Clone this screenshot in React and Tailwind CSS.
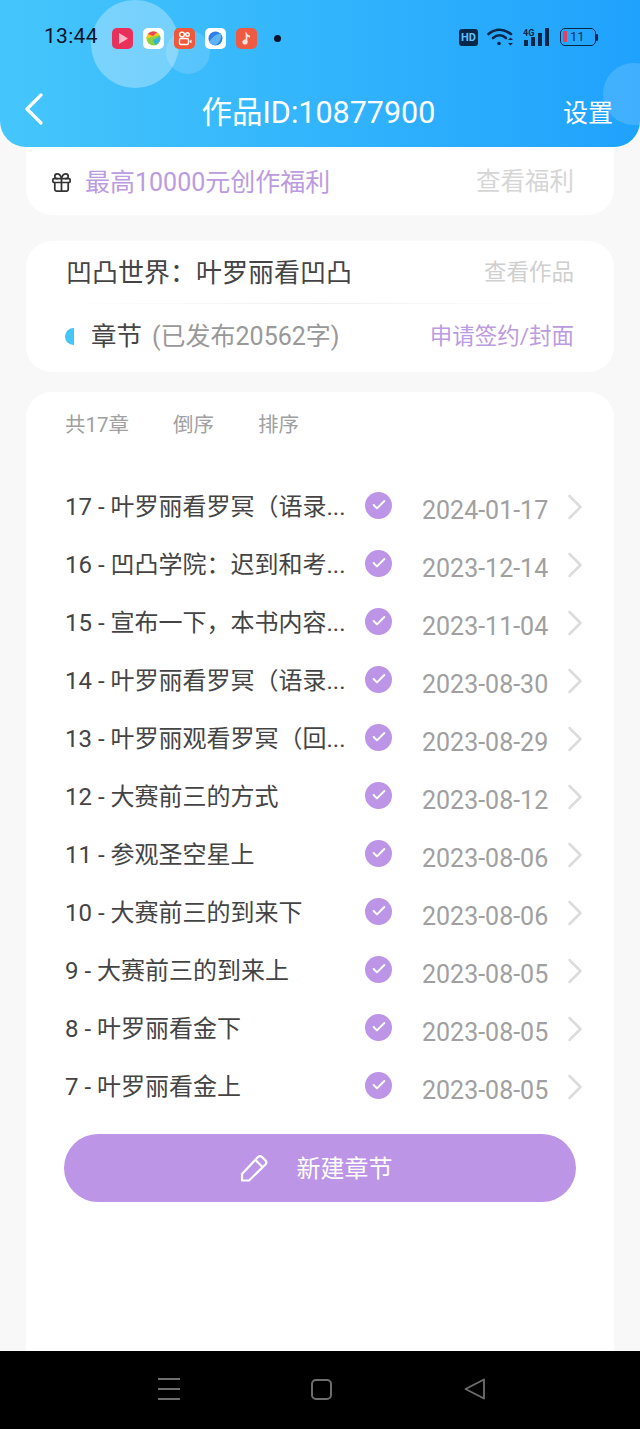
import { Check, Gift } from "lucide-react";

const chapters = [
  { title: "17 - 叶罗丽看罗冥（语录...", date: "2024-01-17" },
  { title: "16 - 凹凸学院：迟到和考...", date: "2023-12-14" },
  { title: "15 - 宣布一下，本书内容...", date: "2023-11-04" },
  { title: "14 - 叶罗丽看罗冥（语录...", date: "2023-08-30" },
  { title: "13 - 叶罗丽观看罗冥（回...", date: "2023-08-29" },
  { title: "12 - 大赛前三的方式", date: "2023-08-12" },
  { title: "11 - 参观圣空星上", date: "2023-08-06" },
  { title: "10 - 大赛前三的到来下", date: "2023-08-06" },
  { title: "9 - 大赛前三的到来上", date: "2023-08-05" },
  { title: "8 - 叶罗丽看金下", date: "2023-08-05" },
  { title: "7 - 叶罗丽看金上", date: "2023-08-05" },
];

function AppIcons() {
  return (
    <div className="flex items-center gap-[10px] ml-[14px] mt-[2px]">
      <svg width="21" height="21" viewBox="0 0 21 21">
        <rect width="21" height="21" rx="5" fill="#e8305a" />
        <path d="M7 5l9 5.500-9 5.500z" fill="#fbb6c6" />
      </svg>
      <svg width="21" height="21" viewBox="0 0 21 21">
        <rect width="21" height="21" rx="5" fill="#fff" />
        <circle cx="10.500" cy="10.500" r="7" fill="#8bd13c" />
        <path d="M3.500 10.500a7 7 0 0 1 13-3.500z" fill="#f6c821" />
        <path d="M5 6a7 7 0 0 1 9-1.500L10 8z" fill="#e8455c" />
        <path d="M17 8a7 7 0 0 1-5 9l-2-5z" fill="#34b6d8" />
      </svg>
      <svg width="21" height="21" viewBox="0 0 21 21">
        <rect width="21" height="21" rx="5" fill="#f0583c" />
        <circle cx="8" cy="6.500" r="2.400" fill="none" stroke="#fff" strokeWidth="1.400" />
        <circle cx="13.500" cy="6.500" r="1.800" fill="none" stroke="#fff" strokeWidth="1.400" />
        <rect x="5.500" y="10.500" width="9" height="6" rx="1.500" fill="none" stroke="#fff" strokeWidth="1.400" />
        <path d="M15.500 13l2-1.200v3.400l-2-1.200" fill="#fff" />
      </svg>
      <svg width="21" height="21" viewBox="0 0 21 21">
        <rect width="21" height="21" rx="5" fill="#fff" />
        <circle cx="10.500" cy="10.500" r="7" fill="#2c7fe8" />
        <path d="M4 14c3-5 7-8 12-9 1 5-1 9-5 12-3 0-6-1-7-3z" fill="#5fb4f5" />
      </svg>
      <svg width="21" height="21" viewBox="0 0 21 21">
        <rect width="21" height="21" rx="5" fill="#ee5a42" />
        <circle cx="9" cy="14" r="2.600" fill="#fde4dc" />
        <path d="M10.500 14V6.500c1 1.800 2.500 2 3.500 2.200" fill="none" stroke="#fde4dc" strokeWidth="1.700" />
      </svg>
      <span className="ml-[7px] w-[7px] h-[7px] rounded-full bg-[#06122a]" />
    </div>
  );
}

function StatusIcons() {
  return (
    <div className="flex items-center text-[#06264a] gap-[9px]">
      <span className="w-[19px] h-[17px] rounded-[3px] bg-[#06264a] text-[#5fc2ff] text-[11px] font-bold leading-[17px] text-center">
        HD
      </span>
      <svg width="27" height="20" viewBox="0 0 27 20" fill="none" stroke="currentColor" strokeWidth="2.600" strokeLinecap="round">
        <path d="M1.500 7C8 1.500 16 1.500 24 7" />
        <path d="M6 11c4-3.500 9-3.500 13 0" />
        <circle cx="12" cy="16.500" r="1.800" fill="currentColor" stroke="none" />
        <path d="M21 13l2.500-2.500L26 13z" fill="currentColor" stroke="none" />
        <path d="M21 16l2.500 2.500L26 16z" fill="currentColor" stroke="none" />
      </svg>
      <svg width="28" height="20" viewBox="0 0 28 20" fill="currentColor">
        <rect x="1" y="13" width="4" height="6" />
        <rect x="8" y="10" width="4" height="9" />
        <rect x="15" y="6" width="4" height="13" />
        <rect x="22" y="1" width="4" height="18" />
        <text x="0" y="9" fontSize="9" fontWeight="700" fontFamily="Roboto, sans-serif">4G</text>
      </svg>
      <div className="flex items-center">
        <div className="relative w-[36px] h-[18px] rounded-[5px] border-[1.5px] border-[#06264a] text-[13px] leading-[15px] text-[#0c3560] pl-[9px]">
          <span className="absolute left-[2px] top-[2px] w-[4px] h-[11px] bg-[#e8405a] rounded-[1px]" />
          11
        </div>
        <span className="w-[2px] h-[7px] bg-[#06264a] rounded-r-[1px]" />
      </div>
    </div>
  );
}

function ChapterRow({ title, date }) {
  return (
    <div className="h-[58px] flex items-center">
      <span className="w-[300px] shrink-0 whitespace-nowrap overflow-hidden text-[24px] text-[#444444] leading-[30px] mt-[2px]">
        {title}
      </span>
      <span className="shrink-0 w-[27px] h-[27px] rounded-full bg-[#bc95e6] flex items-center justify-center -mt-[2px]">
        <Check size={16} color="#ffffff" strokeWidth={3} />
      </span>
      <span className="shrink-0 ml-[30px] whitespace-nowrap text-[25px] text-[#a0a0a0] leading-[30px] mt-[10px]">
        {date}
      </span>
      <svg className="shrink-0 ml-[19px] mt-[2px]" width="16" height="26" viewBox="0 0 16 26" fill="none" stroke="#dcdcdc" strokeWidth="2.600" strokeLinecap="round" strokeLinejoin="round">
        <path d="M2.500 2l11 11-11 11" />
      </svg>
    </div>
  );
}

export default function App() {
  return (
    <div className="relative w-[640px] h-[1429px] overflow-hidden flex flex-col bg-[#f8f8f8] font-['Roboto','Noto_Sans_CJK_SC',sans-serif]">
      <header className="relative z-10 shrink-0 h-[147px] overflow-hidden rounded-b-[26px] bg-gradient-to-r from-[#45c6fb] to-[#1fa2fd]">
        {/* bubbles */}
        <div className="absolute left-[166px] top-[30px] w-[44px] h-[44px] rounded-full bg-white/15" />
        <div className="absolute left-[91px] top-0 w-[88px] h-[88px] rounded-full bg-white/30" />
        <div className="absolute left-[603px] top-[63px] w-[62px] h-[62px] rounded-full bg-white/15" />

        <div className="relative flex items-center justify-between h-[74px] pl-[44px] pr-[42px]">
          <div className="flex items-center">
            <span className="text-[21px] text-[#06122a] tracking-[0.3px]">13:44</span>
            <AppIcons />
          </div>
          <StatusIcons />
        </div>

        <div className="relative flex items-center h-[73px] pl-[24px] pr-[27px] text-white">
          <div className="flex-1 -mt-[4px]">
            <svg width="20" height="32" viewBox="0 0 20 32" fill="none" stroke="currentColor" strokeWidth="3.200" strokeLinecap="round" strokeLinejoin="round">
              <path d="M17 2L3 16l14 14" />
            </svg>
          </div>
          <h1 className="text-[30.500px] font-normal mt-[5px] whitespace-nowrap">作品ID:10877900</h1>
          <div className="flex-1 flex justify-end">
            <span className="text-[25px] mt-[7px]">设置</span>
          </div>
        </div>
      </header>

      <main className="flex-1 flex flex-col mx-[26px]">
        {/* benefits */}
        <section className="h-[68px] bg-white rounded-b-[26px] flex items-center justify-between pl-[24px] pr-[40px]">
          <div className="flex items-center mt-[3px]">
            <Gift size={23} color="#333333" strokeWidth={1.800} />
            <span className="ml-[12px] text-[25px] text-[#bc9be0]">最高10000元创作福利</span>
          </div>
          <span className="text-[24.500px] text-[#d6d6d6] mt-[3px]">查看福利</span>
        </section>

        {/* work info */}
        <section className="mt-[26px] h-[131px] bg-white rounded-[26px] px-[40px]">
          <div className="h-[62px] flex items-center justify-between">
            <span className="text-[26px] text-[#444444] mt-[2px]">凹凸世界：叶罗丽看凹凸</span>
            <span className="text-[22.500px] text-[#cfcfcf] mt-[1px]">查看作品</span>
          </div>
          <div className="h-px bg-gradient-to-r from-white via-[#efefef] to-white" />
          <div className="h-[67px] flex items-center justify-between -mt-[1px]">
            <div className="flex items-center">
              <span className="w-[9px] h-[17px] rounded-l-full bg-[#45c6f5] -ml-[1px]" />
              <span className="ml-[17px] text-[25.500px] text-[#444444]">章节</span>
              <span className="ml-[10px] text-[25px] text-[#999999]">(已发布20562字)</span>
            </div>
            <span className="text-[22.500px] text-[#bc9be0]">申请签约/封面</span>
          </div>
        </section>

        {/* chapter list */}
        <section className="mt-[20px] flex-1 bg-white rounded-t-[26px] pl-[39px] pr-[24px] pt-[19px]">
          <div className="flex items-center gap-[44px] text-[20.500px] text-[#a0a0a0] h-[28px]">
            <span>共17章</span>
            <span>倒序</span>
            <span>排序</span>
          </div>
          <div className="mt-[38px]">
            {chapters.map((c) => (
              <ChapterRow key={c.title} title={c.title} date={c.date} />
            ))}
          </div>
          <button className="mt-[19px] w-[512px] -ml-[1px] h-[68px] rounded-full bg-[#bc95e6] flex items-center justify-center text-white text-[24px]">
            <svg className="-ml-[8px]" width="28" height="28" viewBox="0 0 28 28" fill="none" stroke="currentColor" strokeWidth="2.200" strokeLinejoin="round">
              <path d="M2 26.500v-6.500L18 3a3 3 0 0 1 4 0l3.500 3.500a3 3 0 0 1 0 4L9 26.500z" />
              <path d="M15.500 6l7 7" />
            </svg>
            <span className="ml-[29px] mt-[2px]">新建章节</span>
          </button>
        </section>
      </main>

      <footer className="shrink-0 h-[78px] bg-black flex items-center pb-[2px]">
        <div className="ml-[158px] flex flex-col gap-[8px]">
          <span className="w-[22px] h-[2px] bg-[#6e6e6e]" />
          <span className="w-[22px] h-[2px] bg-[#6e6e6e]" />
          <span className="w-[22px] h-[2px] bg-[#6e6e6e]" />
        </div>
        <span className="ml-[131px] w-[21px] h-[21px] rounded-[5px] border-2 border-[#6e6e6e]" />
        <svg className="ml-[132px]" width="22" height="22" viewBox="0 0 22 22" fill="none" stroke="#6e6e6e" strokeWidth="1.800" strokeLinejoin="round">
          <path d="M20 1.500v19L1.500 11z" />
        </svg>
      </footer>
    </div>
  );
}
